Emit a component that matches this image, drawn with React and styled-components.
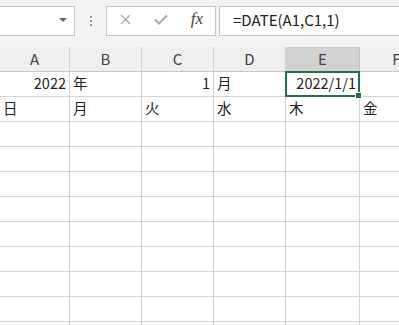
import React from "react"
import styled, { createGlobalStyle } from "styled-components"

const GlobalStyle = createGlobalStyle`
body {
  margin: 0;
  background: #ffffff;
  font-family: "Noto Sans CJK JP", "Noto Sans", sans-serif;
  overflow: hidden;
}
`

const Page = styled.div`
width: 399px;
height: 325px;
overflow: hidden;
background: #ffffff;
`

const Toolbar = styled.div`
display: flex;
align-items: flex-start;
height: 47px;
padding-top: 6px;
box-sizing: border-box;
background: #f3f3f3;
`

const NameBox = styled.div`
width: 76px;
height: 30px;
margin-left: -1px;
box-sizing: border-box;
background: #ffffff;
border: 1px solid #c6c6c6;
display: flex;
align-items: center;
justify-content: flex-end;
padding-right: 7px;
`

const Arrow = styled.div`
width: 0;
height: 0;
margin-top: -2px;
border-left: 4px solid transparent;
border-right: 4px solid transparent;
border-top: 4px solid #666666;
`

const Splitter = styled.div`
width: 31px;
height: 30px;
display: flex;
flex-direction: column;
align-items: center;
justify-content: center;
gap: 2px;
span {
  width: 2px;
  height: 2px;
  background: #9a9a9a;
}
`

const IconBox = styled.div`
width: 110px;
height: 30px;
box-sizing: border-box;
background: #ffffff;
border: 1px solid #c6c6c6;
display: grid;
grid-template-columns: repeat(3, 36px);
align-items: center;
justify-items: center;
`

const Fx = styled.span`
font-family: "Liberation Serif", serif;
font-style: italic;
font-size: 17px;
color: #444444;
margin-top: -4px;
`

const FormulaBox = styled.div`
flex: 1;
height: 30px;
margin-left: 3px;
margin-right: -1px;
box-sizing: border-box;
background: #ffffff;
border: 1px solid #c6c6c6;
display: flex;
align-items: center;
padding-left: 13px;
padding-bottom: 4px;
font-size: 15px;
color: #222222;
white-space: nowrap;
`

const Grid = styled.div`
display: grid;
grid-template-columns: 70px 72px 72px 72px 74px 74px;
grid-auto-rows: 25px;
`

const HeadCell = styled.div`
box-sizing: border-box;
background: ${p => (p.$active ? "#d2d2d2" : "#efefef")};
border-right: 1px solid ${p => (p.$active ? "#c0c0c0" : "#d5d5d5")};
border-bottom: 1px solid #c8c8c8;
display: flex;
align-items: center;
justify-content: center;
font-size: 15px;
color: #444444;
padding-bottom: 1px;
`

const Cell = styled.div`
position: relative;
box-sizing: border-box;
border-right: 1px solid #d4d4d4;
border-bottom: 1px solid #d4d4d4;
display: flex;
align-items: center;
justify-content: ${p => (p.$right ? "flex-end" : "flex-start")};
padding: 0 3px 3px 3px;
font-size: 14.5px;
color: #222222;
white-space: nowrap;
${p =>
  p.$selected &&
  `
  &::after {
    content: "";
    position: absolute;
    left: -1px;
    top: -1px;
    right: -1px;
    bottom: -1px;
    border: 2px solid #217346;
  }
  &::before {
    content: "";
    position: absolute;
    right: -3px;
    bottom: -3px;
    width: 5px;
    height: 5px;
    background: #217346;
    border: 1px solid #ffffff;
    z-index: 2;
  }
`}
`

const columns = ["A", "B", "C", "D", "E", "F"]

const rows = [
  [
    { text: "2022", right: true },
    { text: "年" },
    { text: "1", right: true },
    { text: "月" },
    { text: "2022/1/1", right: true, selected: true },
    { text: "" },
  ],
  [
    { text: "日" },
    { text: "月" },
    { text: "火" },
    { text: "水" },
    { text: "木" },
    { text: "金" },
  ],
]

const emptyRows = 9

const CrossIcon = () => (
  <svg width="11" height="11" viewBox="0 0 11 11" style={{ marginTop: -4 }}>
    <path d="M1 1 L10 10 M10 1 L1 10" stroke="#ababab" strokeWidth="1.4" fill="none" />
  </svg>
)

const CheckIcon = () => (
  <svg width="14" height="11" viewBox="0 0 14 11" style={{ marginTop: -3 }}>
    <path d="M1 5.5 L5 9.5 L13 1.5" stroke="#ababab" strokeWidth="2" fill="none" />
  </svg>
)

const App = () => (
  <Page>
    <GlobalStyle />
    <Toolbar>
      <NameBox>
        <Arrow />
      </NameBox>
      <Splitter>
        <span />
        <span />
        <span />
      </Splitter>
      <IconBox>
        <CrossIcon />
        <CheckIcon />
        <Fx>fx</Fx>
      </IconBox>
      <FormulaBox>=DATE(A1,C1,1)</FormulaBox>
    </Toolbar>
    <Grid>
      {columns.map(c => (
        <HeadCell key={c} $active={c === "E"}>{c}</HeadCell>
      ))}
      {rows.map((row, r) =>
        row.map((cell, i) => (
          <Cell key={r + "-" + i} $right={cell.right} $selected={cell.selected}>
            {cell.text}
          </Cell>
        ))
      )}
      {Array.from({ length: emptyRows * columns.length }).map((_, i) => (
        <Cell key={"e" + i} />
      ))}
    </Grid>
  </Page>
)

export default App
